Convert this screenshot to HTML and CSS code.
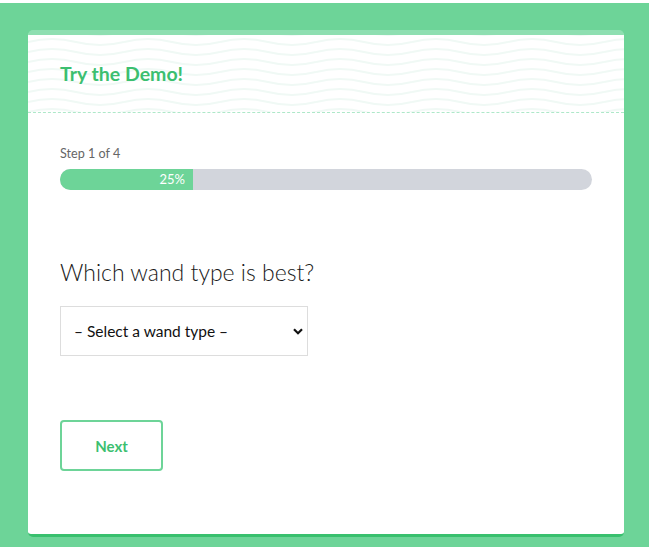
FILE: index.html
```html
<!DOCTYPE html>
<html lang="en">
<head>
<meta charset="utf-8">
<title>Try the Demo!</title>
<link rel="stylesheet" href="styles.css">
</head>
<body>
<div class="page">
  <div class="card">
    <div class="card-header">
      <svg class="waves" width="100%" height="100%" aria-hidden="true">
        <defs>
          <pattern id="wave" width="96" height="10" patternUnits="userSpaceOnUse" x="0" y="2">
            <path d="M0 5 Q24 -1 48 5 T96 5" fill="none" stroke="#f0f9f5" stroke-width="2"/>
          </pattern>
        </defs>
        <rect width="100%" height="100%" fill="url(#wave)"/>
      </svg>
      <h1 class="title">Try the Demo!</h1>
    </div>
    <div class="card-body">
      <div class="step-label">Step 1 of 4</div>
      <div class="progress">
        <div class="progress-fill" style="width:25%">25%</div>
      </div>
      <h2 class="question">Which wand type is best?</h2>
      <div class="select-wrap">
        <select class="select">
          <option>– Select a wand type –</option>
          <option>Oak</option>
          <option>Holly</option>
          <option>Elder</option>
        </select>
        <svg class="chevron" width="10" height="7" viewBox="0 0 10 7" aria-hidden="true">
          <path d="M1 1.2 L5 5.2 L9 1.2" fill="none" stroke="#111" stroke-width="2.2"/>
        </svg>
      </div>
      <button class="btn-next" type="button">Next</button>
    </div>
  </div>
</div>
</body>
</html>
```
FILE: styles.css
```css
html, body {
  margin: 0;
  padding: 0;
  background: #ffffff;
}
body {
  padding-top: 3px;
  font-family: Lato, "Noto Sans", sans-serif;
}
.page {
  background: #6dd498;
  height: 544px;
  padding: 27px 25px 0 28px;
  box-sizing: border-box;
}
.card {
  background: #ffffff;
  border-top: 5px solid #8edfb1;
  border-bottom: 3px solid #38c06e;
  border-radius: 5px;
  overflow: hidden;
  width: 596px;
}
.card-header {
  position: relative;
  height: 77px;
  border-bottom: 1px dashed #aee8c9;
  display: flex;
  align-items: center;
  padding: 0 32px;
}
.waves {
  position: absolute;
  left: 0;
  top: 0;
}
.title {
  position: relative;
  margin: 0;
  font-size: 19.5px;
  font-weight: 700;
  color: #3cbf70;
}
.card-body {
  padding: 33px 32px 63px 32px;
}
.step-label {
  font-size: 12.6px;
  line-height: 16px;
  color: #666666;
  margin-bottom: 7px;
}
.progress {
  height: 21px;
  background: #d2d5dc;
  border-radius: 11px;
  overflow: hidden;
}
.progress-fill {
  height: 100%;
  background: #6dd498;
  color: #ffffff;
  font-size: 13px;
  line-height: 21px;
  text-align: right;
  padding-right: 8px;
  box-sizing: border-box;
}
.question {
  margin: 68px 0 19px 0;
  font-size: 23px;
  font-weight: 300;
  line-height: 29px;
  color: #1a1a1a;
}
.select-wrap {
  position: relative;
  width: 248px;
}
.select {
  display: block;
  width: 248px;
  height: 50px;
  border: 1px solid #dddddd;
  background: #ffffff;
  font-family: Lato, "Noto Sans", sans-serif;
  font-size: 15.5px;
  font-weight: 400;
  color: #111111;
  padding: 0 30px 0 13px;
  -webkit-appearance: none;
  appearance: none;
  border-radius: 0;
  outline: none;
}
.chevron {
  position: absolute;
  right: 5px;
  top: 22px;
  pointer-events: none;
}
.btn-next {
  display: block;
  margin-top: 64px;
  width: 103px;
  height: 51px;
  border: 2px solid #6dd498;
  border-radius: 4px;
  background: #ffffff;
  color: #3cbf70;
  font-family: Lato, "Noto Sans", sans-serif;
  font-size: 15px;
  font-weight: 700;
  cursor: pointer;
}
```
